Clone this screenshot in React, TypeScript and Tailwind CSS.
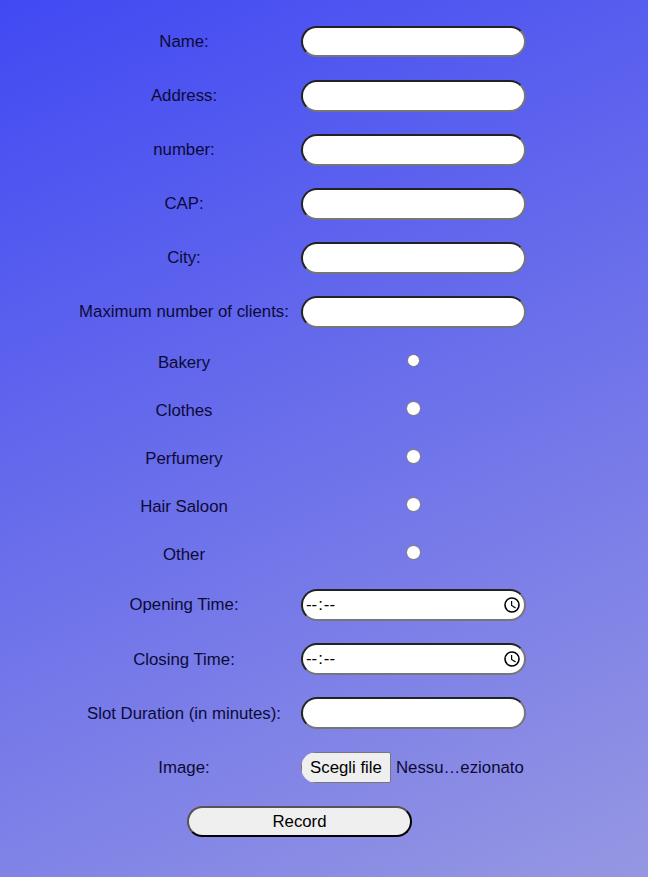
const font = 'font-["Liberation_Sans",Arial,sans-serif]';

const field =
  'block w-[225px] rounded-[16px] border-2 border-t-[#222222] border-l-[#222222] border-r-[#767676] border-b-[#767676] bg-white outline-none';

const textRows = [
  { text: 'Name:', size: 'mb-px h-[31px]' },
  { text: 'Address:', size: 'h-8' },
  { text: 'number:', size: 'h-8' },
  { text: 'CAP:', size: 'h-8' },
  { text: 'City:', size: 'h-8' },
  { text: 'Maximum number of clients:', size: 'h-8' },
];
const categories = [
  { text: 'Bakery', holder: 'w-[225px] pb-[5px]', size: 'size-[13.5px]' },
  { text: 'Clothes', holder: 'w-[224px] pb-[6px]', size: 'size-[15px]' },
  { text: 'Perfumery', holder: 'w-[224px] pb-[6px]', size: 'size-[15px]' },
  { text: 'Hair Saloon', holder: 'w-[224px] pb-[6px]', size: 'size-[15px]' },
  { text: 'Other', holder: 'w-[224px] pb-[6px]', size: 'size-[15px]' },
];
const timeRows = [
  { text: 'Opening Time:', shift: 'mb-[2px]' },
  { text: 'Closing Time:', shift: '' },
];

function Label({ children, shift = '' }: { children: string; shift?: string }) {
  return (
    <span className={`w-[212px] shrink-0 whitespace-nowrap text-center leading-5 text-[#0c0a38] ${shift}`}>
      {children}
    </span>
  );
}

function Clock() {
  return (
    <svg className="h-4 w-4" viewBox="0 0 16 16" fill="none" stroke="#000">
      <circle cx="8" cy="8" r="7" strokeWidth="1.6" />
      <path d="M7.6 4v4.5l4 2.6" strokeWidth="1.2" />
    </svg>
  );
}

export default function App() {
  return (
    <main
      className={`h-[877px] w-[648px] overflow-hidden bg-[linear-gradient(155deg,#4149f3_0%,#9697e2_100%)] pt-[15px] pl-[78px] text-[16.8px] ${font}`}
    >
      <form className="flex flex-col">
        {textRows.map(({ text, size }) => (
          <div key={text} className="flex h-[54px] items-center gap-[11px]">
            <Label>{text}</Label>
            <input aria-label={text} className={`${field} ${size}`} />
          </div>
        ))}
        {categories.map(({ text, holder, size }) => (
          <div key={text} className="flex h-12 items-center gap-[11px]">
            <Label>{text}</Label>
            <div className={`flex justify-center ${holder}`}>
              <input
                type="radio"
                name="category"
                aria-label={text}
                className={`appearance-none rounded-full border border-[#767676] bg-white ${size}`}
              />
            </div>
          </div>
        ))}
        {timeRows.map(({ text, shift }) => (
          <div key={text} className="flex h-[54px] items-center gap-[11px]">
            <Label shift={shift}>{text}</Label>
            <div className={`${field} mb-[2px] !flex h-8 items-center justify-between pr-[4px] pl-[2px]`}>
              <span className="flex leading-5">
                <span className="px-px">--</span>
                <span>:</span>
                <span className="px-px">--</span>
              </span>
              <Clock />
            </div>
          </div>
        ))}
        <div className="flex h-[54px] items-center gap-[11px]">
          <Label>Slot Duration (in minutes):</Label>
          <input aria-label="Slot Duration" className={`${field} mb-[2px] h-8`} />
        </div>
        <div className="flex h-[54px] items-center gap-[11px]">
          <Label>Image:</Label>
          <div className="mb-[2px] flex h-[31px] w-[225px] items-center gap-[5px] overflow-hidden rounded-[16px] whitespace-nowrap">
            <button
              type="button"
              className="h-[31px] w-[90px] shrink-0 rounded-[2px] border border-[#767676] bg-[#efefef] pt-[2px] leading-5 text-black"
            >
              Scegli file
            </button>
            <span className="pt-[2px] leading-5 text-[#0c0a38]">Nessu…ezionato</span>
          </div>
        </div>
        <div className="flex h-[54px] items-center pl-[109px]">
          <button
            type="button"
            className="mb-[2px] h-[31px] w-[225px] rounded-[16px] border-2 border-t-[#555555] border-l-[#555555] border-r-black border-b-black bg-[#efefef] pt-[2px] leading-5 text-black"
          >
            Record
          </button>
        </div>
      </form>
    </main>
  );
}
